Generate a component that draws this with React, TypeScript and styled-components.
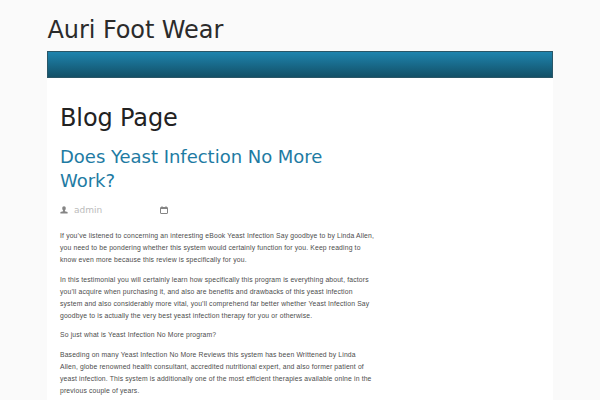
import React from "react";
import styled, { createGlobalStyle } from "styled-components";

const GlobalStyle = createGlobalStyle`
  html, body { margin: 0; padding: 0; height: 400px; overflow: hidden; background: #fafafa; }
  * { box-sizing: border-box; }
`;
const Page = styled.div`
  width: 506px;
  margin-left: 47px;
  height: 400px;
  display: flex;
  flex-direction: column;
  overflow: hidden;
  font-family: "DejaVu Sans", sans-serif;
`;
const SiteTitle = styled.h1`
  margin: 0;
  height: 51px;
  flex-shrink: 0;
  padding: 14px 0 0 0.5px;
  font-size: 24px;
  letter-spacing: -0.08px;
  line-height: 32px;
  font-weight: 400;
  color: #2b2b2b;
  white-space: nowrap;
`;
const NavBar = styled.nav`
  height: 27px;
  flex-shrink: 0;
  border: 1px solid #2a5667;
  background: linear-gradient(#1e84ae, #135067);
`;
const Content = styled.main`
  flex: 1;
  min-height: 0;
  background: #fff;
  padding: 24px 13px 0;
`;
const PageTitle = styled.h2`
  margin: 0;
  font-size: 24px;
  letter-spacing: -0.12px;
  line-height: 32px;
  font-weight: 400;
  color: #222;
`;
const PostTitle = styled.h3`
  margin: 11px 0 0;
  width: 300px;
  font-size: 18px;
  letter-spacing: -0.02px;
  line-height: 24px;
  font-weight: 400;
  color: #1e7ba3;
`;
const Meta = styled.div`
  display: flex;
  align-items: center;
  height: 14px;
  margin: 10px 0 13px;
  font-size: 9px;
  color: #bbb;
`;
const Author = styled.span`
  width: 86px;
  margin-left: 6px;
`;
const Paragraph = styled.p`
  margin: 0 0 7.5px;
  font: 6.8px/12px "Liberation Sans", Arial, sans-serif;
  letter-spacing: 0.155px;
  color: #4c4c4c;
`;
const Line = styled.span`
  display: block;
  white-space: nowrap;
`;

const paragraphs = [
  ["If you’ve listened to concerning an interesting eBook Yeast Infection Say goodbye to by Linda Allen,", "you need to be pondering whether this system would certainly function for you. Keep reading to", "know even more because this review is specifically for you."],
  ["In this testimonial you will certainly learn how specifically this program is everything about, factors", "you’ll acquire when purchasing it, and also are benefits and drawbacks of this yeast infection", "system and also considerably more vital, you’ll comprehend far better whether Yeast Infection Say", "goodbye to is actually the very best yeast infection therapy for you or otherwise."],
  ["So just what is Yeast Infection No More program?"],
  ["Baseding on many Yeast Infection No More Reviews this system has been Writtened by Linda", "Allen, globe renowned health consultant, accredited nutritional expert, and also former patient of", "yeast infection. This system is additionally one of the most efficient therapies available onlne in the", "previous couple of years."],
];

const UserIcon = () => (
  <svg width="8" height="8" viewBox="0 0 8 8" fill="#858585">
    <path d="M2.2 2Q2.2 .3 4 .3T5.8 2Q5.8 3.8 4.9 4.5V5.2L7.6 6.1V7.5H.4V6.1L3.1 5.2V4.5Q2.2 3.8 2.2 2Z" />
  </svg>
);
const CalendarIcon = () => (
  <svg width="8" height="8" viewBox="0 0 8 8" fill="none" stroke="#858585">
    <rect x=".5" y="1.5" width="7" height="6" rx=".5" />
    <path d="M.5 2.2h7" strokeWidth="1.6" />
    <path d="M2 .2v2M6 .2v2" />
  </svg>
);

export default function App() {
  return (
    <>
      <GlobalStyle />
      <Page>
        <SiteTitle>Auri Foot Wear</SiteTitle>
        <NavBar />
        <Content>
          <PageTitle>Blog Page</PageTitle>
          <PostTitle>Does Yeast Infection No More Work?</PostTitle>
          <Meta>
            <UserIcon />
            <Author>admin</Author>
            <CalendarIcon />
          </Meta>
          {paragraphs.map((lines) => (
            <Paragraph key={lines[0]}>{lines.map((l) => <Line key={l}>{l}</Line>)}</Paragraph>
          ))}
        </Content>
      </Page>
    </>
  );
}
